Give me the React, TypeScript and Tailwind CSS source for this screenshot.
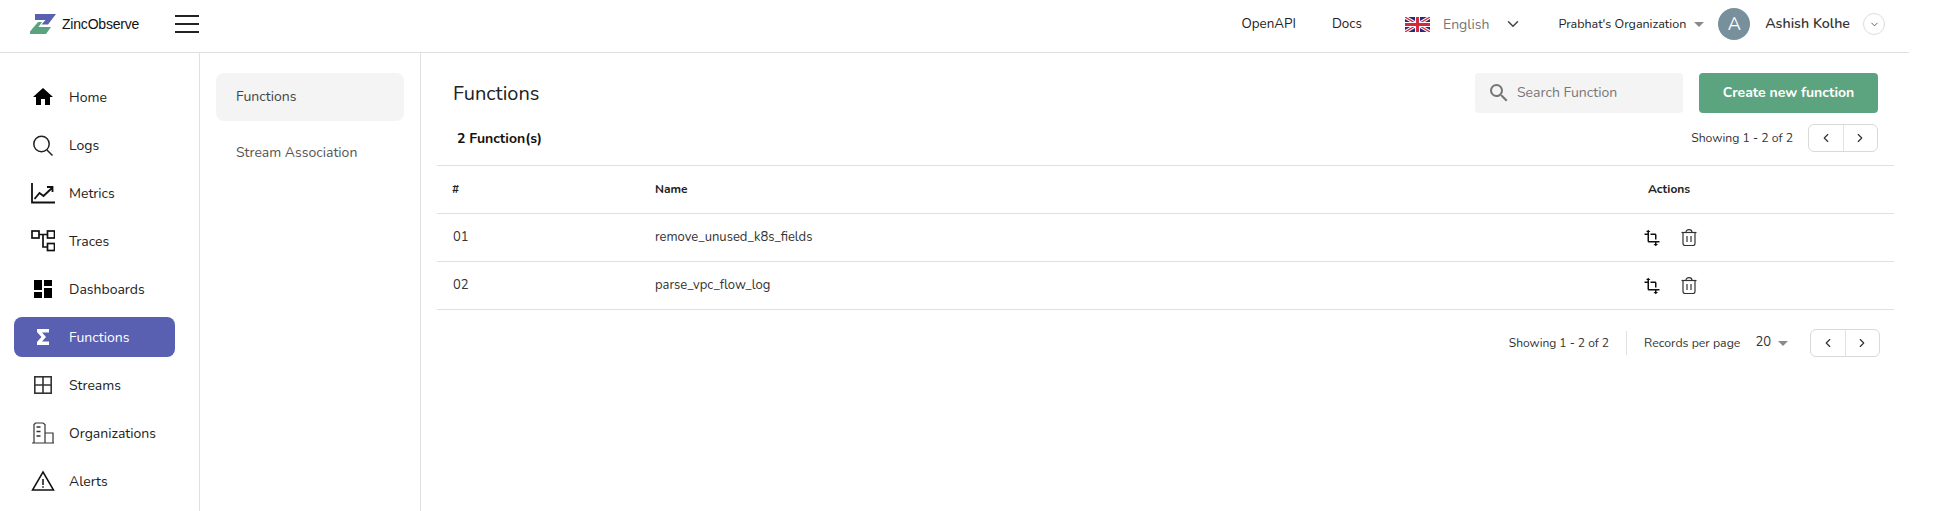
import { ChevronDown, ChevronLeft, ChevronRight } from "lucide-react";
import { MdDashboard, MdHome, MdSearch, MdTransform } from "react-icons/md";

function LogsIcon() {
  return (
    <svg viewBox="0 0 24 24" className="h-6 w-6" fill="none" stroke="#222" strokeWidth="1.5">
      <circle cx="10.5" cy="11" r="7.7" />
      <path d="M16 17l5.5 5.5" />
    </svg>
  );
}

function MetricsIcon() {
  return (
    <svg viewBox="0 0 24 24" className="h-6 w-6" fill="none" stroke="#111" strokeWidth="1.8">
      <path d="M1 2v19.5h23" />
      <path d="M3.5 18l5-6 4 3 8.5-8M16 6h5.5v5" />
    </svg>
  );
}

function TracesIcon() {
  return (
    <svg viewBox="0 0 24 24" className="h-6 w-6" fill="none" stroke="#111" strokeWidth="1.7">
      <rect x="1" y="2" width="7" height="7" />
      <rect x="16.5" y="2" width="7" height="7" />
      <rect x="16.5" y="14.5" width="7" height="7" />
      <path d="M8 5.5h8.5M12 5.5V18h4.5" />
    </svg>
  );
}

function SigmaIcon() {
  return (
    <svg viewBox="0 0 24 24" className="h-6 w-6" fill="#fff">
      <path d="M6 4h12v3.500h-7l4 4.500-4 4.500h7V20H6v-3l4.500-5L6 7z" />
    </svg>
  );
}

function StreamsIcon() {
  return (
    <svg viewBox="0 0 24 24" className="h-6 w-6" fill="none" stroke="#333" strokeWidth="1.6">
      <rect x="3.8" y="3.8" width="16.4" height="16.4" />
      <path d="M12 3.8v16.4M3.8 12h16.4" />
    </svg>
  );
}

function OrgIcon() {
  return (
    <svg viewBox="0 0 24 24" className="h-6 w-6" fill="none" stroke="#333" strokeWidth="1.2">
      <path d="M1 22h22M3 22V3.500L4.500 2H12l2 1.500V22M14 12h8v10" />
      <path d="M5.500 6h4M5.500 10.500h4M5.500 15h4" strokeWidth="1.6" />
    </svg>
  );
}

function AlertIcon() {
  return (
    <svg viewBox="0 0 24 24" className="h-6 w-6" fill="none" stroke="#111" strokeWidth="1.5">
      <path d="M12 3l10.500 18h-21z" />
      <path d="M12 10v6M12 17.3v1.500" />
    </svg>
  );
}

function TrashIcon() {
  return (
    <svg viewBox="0 0 16 17" className="h-[17px] w-4" fill="none" stroke="#333" strokeWidth="1.2">
      <path d="M.5 3.500h15" />
      <path d="M5 3.500C5 1.500 6 .7 8 .7s3 .8 3 2.800" />
      <path d="M2 3.500v11a2 2 0 0 0 2 2h8a2 2 0 0 0 2-2v-11" />
      <path d="M6 7v6M10 7v6" />
    </svg>
  );
}

const NAV = [
  { label: "Home", icon: <MdHome size={24} color="#000" /> },
  { label: "Logs", icon: <LogsIcon /> },
  { label: "Metrics", icon: <MetricsIcon /> },
  { label: "Traces", icon: <TracesIcon /> },
  { label: "Dashboards", icon: <MdDashboard size={24} color="#000" /> },
  { label: "Functions", icon: <SigmaIcon />, active: true },
  { label: "Streams", icon: <StreamsIcon /> },
  { label: "Organizations", icon: <OrgIcon /> },
  { label: "Alerts", icon: <AlertIcon /> },
];

const ROWS = [
  { id: "01", name: "remove_unused_k8s_fields" },
  { id: "02", name: "parse_vpc_flow_log" },
];

function Pager() {
  return (
    <div className="flex h-[28px] w-[70px] rounded-md border border-[#d9d9d9] text-[#333]">
      <div className="flex flex-1 items-center justify-center border-r border-[#e2e2e2]">
        <ChevronLeft size={14} />
      </div>
      <div className="flex flex-1 items-center justify-center">
        <ChevronRight size={14} />
      </div>
    </div>
  );
}

function Caret() {
  return <span className="h-0 w-0 border-x-[5px] border-t-[5px] border-x-transparent border-t-[#8a8a8a]" />;
}

export default function App() {
  return (
    <div className="h-[511px] w-[1909px] overflow-hidden bg-white font-['Nunito','Noto_Sans',sans-serif] text-[#222]">
      {/* Header */}
      <header className="flex h-[53px] items-center border-b border-[#e0e0e0] pb-1 pl-[30px] pr-6">
        <svg viewBox="0 0 26 20" className="h-5 w-[26px]">
          <path d="M5 0h21l-8 10.500h-6.500l4-4.500H5z" fill="#5960b2" />
          <path d="M0 20v-2.500L8 8h4L8.500 13H21l-5 7z" fill="#5ba37f" />
        </svg>
        <span className="ml-[6px] font-['Liberation_Sans',sans-serif] text-[14px] tracking-[-0.2px] text-[#111]">ZincObserve</span>
        <div className="ml-[36px] flex h-[18px] w-6 flex-col justify-between">
          <span className="h-[2px] bg-[#222]" />
          <span className="h-[2px] bg-[#222]" />
          <span className="h-[2px] bg-[#222]" />
        </div>
        <div className="ml-auto flex items-center text-[14px]">
          <span className="text-[13.4px]">OpenAPI</span>
          <span className="ml-9 text-[13.4px]">Docs</span>
          <svg viewBox="0 0 60 36" className="ml-[43px] h-[15px] w-[25px]">
            <rect width="60" height="36" fill="#27297d" />
            <path d="M0 0l60 36M60 0L0 36" stroke="#fff" strokeWidth="8" />
            <path d="M0 0l60 36M60 0L0 36" stroke="#d8263b" strokeWidth="3" />
            <path d="M30 0v36M0 18h60" stroke="#fff" strokeWidth="12" />
            <path d="M30 0v36M0 18h60" stroke="#d8263b" strokeWidth="7" />
          </svg>
          <span className="ml-[13px] text-[#757575]">English</span>
          <ChevronDown size={18} className="ml-[15px] text-[#444]" />
          <span className="ml-[36px] text-[12.5px]">Prabhat's Organization</span>
          <span className="ml-2 flex"><Caret /></span>
          <span className="ml-[14px] flex h-8 w-8 items-center justify-center rounded-full bg-[#78909c] text-[18px] text-white">A</span>
          <span className="ml-[15px] text-[14.2px] font-semibold text-[#333]">Ashish Kolhe</span>
          <span className="ml-[13px] flex h-[22px] w-[22px] items-center justify-center rounded-full border border-[#ddd] text-[#555]">
            <ChevronDown size={11} />
          </span>
        </div>
      </header>

      <div className="flex h-[458px]">
        {/* Main nav */}
        <nav className="flex w-[200px] shrink-0 flex-col gap-2 border-r border-[#e0e0e0] pl-[14px] pr-6 pt-6">
          {NAV.map((item) => (
            <div
              key={item.label}
              className={`flex h-10 items-center rounded-lg text-[14px] ${item.active ? "bg-[#5960b2] text-white" : "text-[#222]"}`}
            >
              <span className="ml-[17px] mr-[14px] flex h-6 w-6 items-center justify-center">{item.icon}</span>
              <span>{item.label}</span>
            </div>
          ))}
        </nav>

        {/* Secondary nav */}
        <aside className="flex w-[221px] shrink-0 flex-col gap-[11px] border-r border-[#e0e0e0] px-4 pt-5 text-[14px] text-[#555]">
          <div className="flex h-12 items-center rounded-lg bg-[#f4f4f4] px-5 pb-[2px] text-[#444]">Functions</div>
          <div className="flex h-10 items-center px-5">Stream Association</div>
        </aside>

        {/* Content */}
        <main className="min-w-0 flex-1 pl-4 pr-[15px] pt-5">
          <div className="flex h-10 items-center justify-between">
            <h1 className="pl-4 pt-[2px] text-[20px] leading-none text-[#222]">Functions</h1>
            <div className="flex gap-4 pr-4">
              <div className="flex h-10 w-[208px] items-center gap-[6px] rounded-sm bg-[#f4f4f4] pb-px pl-[12px] text-[14px] text-[#777]">
                <MdSearch size={24} color="#757575" />
                Search Function
              </div>
              <button className="h-10 w-[179px] rounded bg-[#5ca380] pb-px text-[14px] font-bold text-white">Create new function</button>
            </div>
          </div>
          <div className="mt-[11px] flex h-[28px] items-center justify-between pl-5 pr-4">
            <span className="text-[14px] font-bold text-[#111]">2 Function(s)</span>
            <div className="flex items-center gap-[15px] text-[12.2px] text-[#333]">
              <span>Showing 1 - 2 of 2</span>
              <Pager />
            </div>
          </div>

          <div className="mt-[13px] border-t border-[#e0e0e0]">
            <div className="flex h-12 items-center border-b border-[#e0e0e0] pb-[2px] text-[12px] font-bold text-[#222]">
              <span className="w-[218px] pl-[15px]">#</span>
              <span className="flex-1">Name</span>
              <span className="w-[246px]">Actions</span>
            </div>
            {ROWS.map((row) => (
              <div key={row.id} className="flex h-12 items-center border-b border-[#e0e0e0] text-[13px] text-[#333]">
                <span className="w-[218px] pl-4">{row.id}</span>
                <span className="flex-1">{row.name}</span>
                <span className="flex w-[246px] items-center gap-5 text-[#111]">
                  <MdTransform size={18} className="-ml-[5px]" />
                  <TrashIcon />
                </span>
              </div>
            ))}
          </div>

          <div className="mt-[19px] flex items-center justify-end pr-[14px] text-[12.3px] text-[#333]">
            <span className="text-[12px]">Showing 1 - 2 of 2</span>
            <span className="mx-[17px] h-6 w-px bg-[#e0e0e0]" />
            <span>Records per page</span>
            <span className="ml-[15px] text-[13px]">20</span>
            <span className="ml-[7px] mr-[22px] flex"><Caret /></span>
            <Pager />
          </div>
        </main>
      </div>
    </div>
  );
}
